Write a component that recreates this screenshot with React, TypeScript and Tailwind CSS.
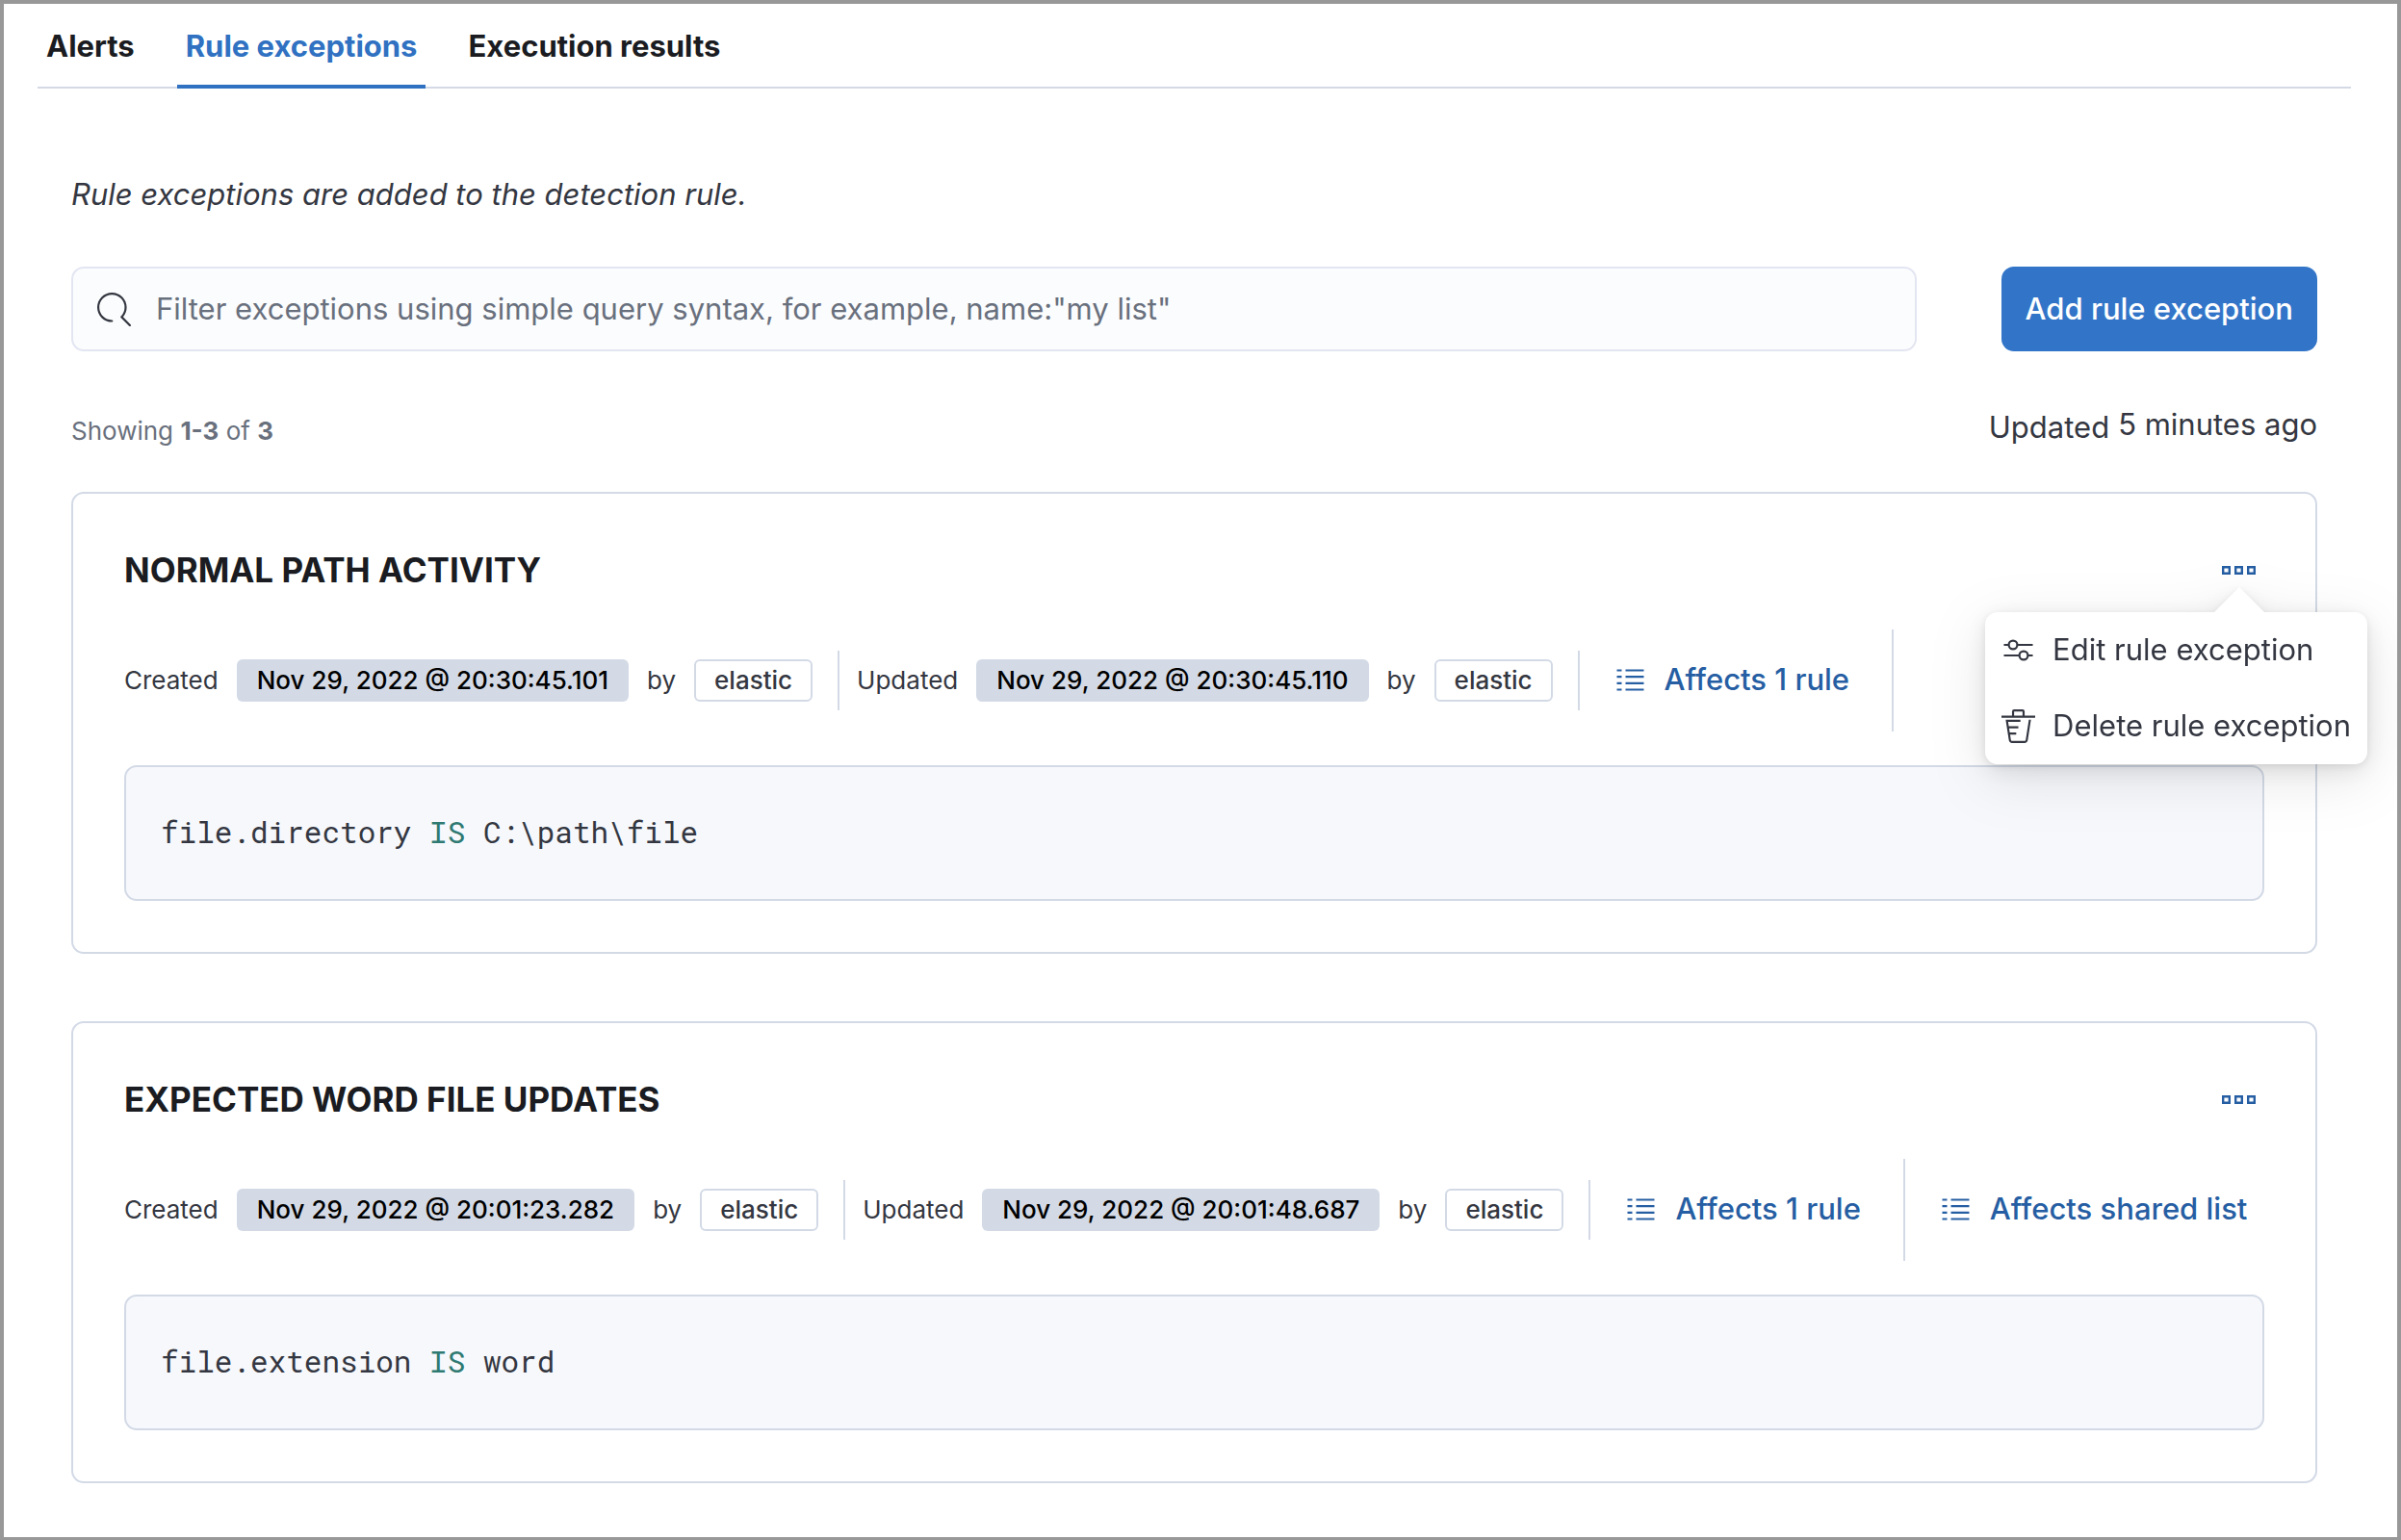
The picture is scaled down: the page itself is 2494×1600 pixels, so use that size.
import type { ReactNode } from 'react';

const tabs = ['Alerts', 'Rule exceptions', 'Execution results'];

const exceptions = [
  {
    name: 'NORMAL PATH ACTIVITY',
    created: 'Nov 29, 2022 @ 20:30:45.101',
    updated: 'Nov 29, 2022 @ 20:30:45.110',
    user: 'elastic',
    field: 'file.directory',
    value: 'C:\\path\\file',
    sharedList: false,
    menuOpen: true,
  },
  {
    name: 'EXPECTED WORD FILE UPDATES',
    created: 'Nov 29, 2022 @ 20:01:23.282',
    updated: 'Nov 29, 2022 @ 20:01:48.687',
    user: 'elastic',
    field: 'file.extension',
    value: 'word',
    sharedList: true,
    menuOpen: false,
  },
];

function SearchIcon() {
  return (
    <svg viewBox="0 0 16 16" className="size-[35px] shrink-0 fill-[#343741]">
      <path d="M11.271 11.978l3.872 3.873a.502.502 0 00.708 0 .502.502 0 000-.708l-3.565-3.564c2.38-2.747 2.267-6.923-.342-9.532-2.73-2.73-7.17-2.73-9.898 0-2.728 2.729-2.728 7.17 0 9.9a6.955 6.955 0 004.949 2.05.5.5 0 000-1 5.96 5.96 0 01-4.242-1.757 6.01 6.01 0 010-8.486 6.004 6.004 0 018.484 0 6.01 6.01 0 010 8.486.5.5 0 00.034.738z" />
    </svg>
  );
}

function ListIcon() {
  return (
    <svg viewBox="0 0 35 35" className="size-[35px] shrink-0" stroke="currentColor" strokeWidth="2.2">
      <path d="M3.5 7.5h5M12.5 7.5h19M3.5 14.2h5M12.5 14.2h19M3.5 20.9h5M12.5 20.9h19M3.5 27.5h5M12.5 27.5h19" />
    </svg>
  );
}

function DotsIcon() {
  return (
    <svg viewBox="0 0 35 9" className="h-[9px] w-[35px]" fill="none" stroke="#265ea3" strokeWidth="2.4">
      <path d="M1.2 1.2h6.6v6.6h-6.6zM14.2 1.2h6.6v6.6h-6.6zM27.2 1.2h6.6v6.6h-6.6z" />
    </svg>
  );
}

function ControlsIcon() {
  return (
    <svg viewBox="0 0 35 35" className="size-[35px] shrink-0" fill="none" stroke="currentColor" strokeWidth="2.2">
      <circle cx="12" cy="12" r="4.4" />
      <circle cx="23" cy="23" r="4.4" />
      <path d="M2.5 12h5.1M16.4 12h16.1M2.5 23h16.1M27.4 23h5.1" />
    </svg>
  );
}

function TrashIcon() {
  return (
    <svg viewBox="0 0 16 16" className="size-[35px] shrink-0" fill="currentColor">
      <path d="M11 3h5v1H0V3h5V1a1 1 0 0 1 1-1h4a1 1 0 0 1 1 1v2zm-7.056 8H7v1H4.1l.392 2.519c.042.269.254.458.493.458h6.03c.239 0 .451-.189.493-.458l1.498-9.576H14l-1.504 9.73c-.116.747-.74 1.304-1.481 1.304h-6.03c-.741 0-1.365-.557-1.481-1.304l-1.511-9.73H9V5.95H3.157L3.476 8H8v1H3.632l.312 2zM6 3h4V1H6v2z" />
    </svg>
  );
}

function Stamp({ label, date, user }: { label: string; date: string; user: string }) {
  return (
    <div className="flex items-center gap-[19px] whitespace-nowrap text-[26px]">
      <span>{label}</span>
      <span className="flex h-11 items-center rounded-[6px] bg-[#d3dae6] px-[21px] font-medium text-black">
        {date}
      </span>
      <span>by</span>
      <span className="flex h-11 items-center rounded-[6px] border-2 border-[#d3dae6] px-[19px] font-medium">
        {user}
      </span>
    </div>
  );
}

function AffectsButton({ children }: { children: ReactNode }) {
  return (
    <button className="flex items-center gap-[18px] whitespace-nowrap px-[35px] text-[31px] font-medium text-[#265ea3]">
      <ListIcon />
      {children}
    </button>
  );
}

function ActionsMenu() {
  return (
    <div
      role="menu"
      className="absolute -right-[107px] top-[70px] z-10 rounded-[13px] bg-white [filter:drop-shadow(0_2px_4px_rgba(0,0,0,0.08))_drop-shadow(0_6px_12px_rgba(0,0,0,0.08))_drop-shadow(0_14px_28px_rgba(0,0,0,0.1))]"
    >
      <svg viewBox="0 0 52 26" className="absolute -top-[26px] right-[107px] h-[26px] w-[52px] fill-white">
        <path d="M0 26L26 0l26 26z" />
      </svg>
      {['Edit rule exception', 'Delete rule exception'].map((item, index) => (
        <button
          key={item}
          role="menuitem"
          className="flex h-[79px] w-full items-center gap-[18px] whitespace-nowrap px-[17px] text-[31px]"
        >
          {index === 0 ? <ControlsIcon /> : <TrashIcon />}
          {item}
        </button>
      ))}
    </div>
  );
}

function ExceptionCard({ item }: { item: (typeof exceptions)[number] }) {
  return (
    <article className="rounded-[13px] border-2 border-[#d3dae6] p-[53px]">
      <div className="flex h-[54px] items-center justify-between">
        <h2 className="text-[35px] font-bold text-[#1a1c21]">{item.name}</h2>
        <div className="relative">
          <button aria-label="Exception actions" className="flex size-[54px] items-center justify-center">
            <DotsIcon />
          </button>
          {item.menuOpen && <ActionsMenu />}
        </div>
      </div>

      <div className="mt-[34px] flex h-[106px] items-center">
        <Stamp label="Created" date={item.created} user={item.user} />
        <div className="ml-[26px] mr-[18px] h-[62px] w-[2px] shrink-0 bg-[#d3dae6]" />
        <Stamp label="Updated" date={item.updated} user={item.user} />
        <div className="ml-[26px] h-[62px] w-[2px] shrink-0 bg-[#d3dae6]" />
        <AffectsButton>Affects 1 rule</AffectsButton>
        <div className="ml-[9px] h-[106px] w-[2px] shrink-0 bg-[#d3dae6]" />
        {item.sharedList && <AffectsButton>Affects shared list</AffectsButton>}
      </div>

      <div className="mt-[35px] flex h-[141px] items-center rounded-[13px] border-2 border-[#d3dae6] bg-[#f6f8fc] px-9 pb-[2px]">
        <code className="font-['Roboto_Mono','Liberation_Mono',monospace] text-[31px]">
          {item.field} <span className="text-[#2f7a72]">IS</span> {item.value}
        </code>
      </div>
    </article>
  );
}

export default function App() {
  return (
    <div className="min-h-screen overflow-x-hidden border-4 border-[#989898] bg-white pb-[56px] pl-[35px] pr-12 font-['Inter',sans-serif] text-[#343741]">
      <div role="tablist" className="flex h-[88px] gap-[35px] border-b-2 border-[#d3dae6]">
        {tabs.map((tab) => (
          <button
            key={tab}
            role="tab"
            aria-selected={tab === 'Rule exceptions'}
            className={
              tab === 'Rule exceptions'
                ? '-mb-[2px] border-b-4 border-[#3071c2] px-[9px] pt-1 text-[31px] font-bold text-[#3071c2]'
                : 'px-[9px] pt-[2px] text-[31px] font-bold text-[#1a1c21]'
            }
          >
            {tab}
          </button>
        ))}
      </div>

      <main className="px-[35px] pt-[88px]">
        <p className="text-[31px] leading-[44px] italic">Rule exceptions are added to the detection rule.</p>

        <div className="mt-[53px] flex gap-[88px]">
          <label className="flex h-[88px] flex-1 items-center gap-[26px] rounded-[13px] border-2 border-[#e3e6f2] bg-[#fbfcfd] px-[25px]">
            <SearchIcon />
            <input
              type="search"
              aria-label="Filter exceptions"
              placeholder={'Filter exceptions using simple query syntax, for example, name:"my list"'}
              className="w-full bg-transparent text-[31px] outline-none placeholder:text-[#69707d]"
            />
          </label>
          <button className="h-[88px] rounded-[13px] bg-[#3275c8] px-[25px] text-[31px] font-medium text-white">
            Add rule exception
          </button>
        </div>

        <div className="mt-[53px] flex items-center justify-between">
          <p className="pt-[6px] text-[26px] text-[#69707d]">
            Showing <b>1-3</b> of <b>3</b>
          </p>
          <p className="flex items-center gap-[9px] text-[31px]">
            <span>Updated</span>
            <span className="pb-[6px]">5 minutes ago</span>
          </p>
        </div>

        <div className="mt-[40px] flex flex-col gap-[70px]">
          {exceptions.map((item) => (
            <ExceptionCard key={item.name} item={item} />
          ))}
        </div>
      </main>
    </div>
  );
}
